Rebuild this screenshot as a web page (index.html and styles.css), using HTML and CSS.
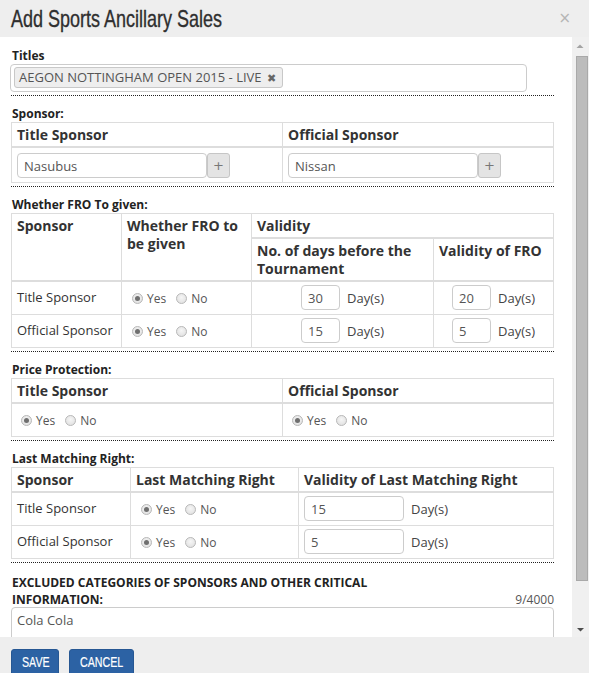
FILE: index.html
```html
<!DOCTYPE html>
<html>
<head>
<meta charset="utf-8">
<link rel="stylesheet" href="styles.css">
</head>
<body>
<div class="modal">
  <div class="modal-header">
    <h1 class="modal-title"><span class="cond">Add Sports Ancillary Sales</span></h1>
    <span class="close">×</span>
  </div>
  <div class="modal-main">
  <div class="modal-body">
    <div class="section">
      <div class="label">Titles</div>
      <div class="tag-input">
        <span class="tag">AEGON NOTTINGHAM OPEN 2015 - LIVE <b class="tag-x">✖</b></span>
      </div>
    </div>

    <div class="section">
      <div class="label">Sponsor:</div>
      <table class="grid sponsor">
        <thead>
          <tr><th class="half">Title Sponsor</th><th>Official Sponsor</th></tr>
        </thead>
        <tbody>
          <tr>
            <td><div class="addon"><input class="field w190" value="Nasubus"><button class="plus">+</button></div></td>
            <td><div class="addon"><input class="field w190" value="Nissan"><button class="plus">+</button></div></td>
          </tr>
        </tbody>
      </table>
    </div>

    <div class="section">
      <div class="label">Whether FRO To given:</div>
      <table class="grid fro">
        <thead>
          <tr>
            <th rowspan="2" class="c-sp">Sponsor</th>
            <th rowspan="2" class="c-given">Whether FRO to be given</th>
            <th colspan="2" class="sub">Validity</th>
          </tr>
          <tr>
            <th class="c-days">No. of days before the Tournament</th>
            <th>Validity of FRO</th>
          </tr>
        </thead>
        <tbody>
          <tr>
            <td>Title Sponsor</td>
            <td><span class="radios"><span class="radio on"></span><span class="rl">Yes</span><span class="radio"></span><span class="rl">No</span></span></td>
            <td class="center"><input class="field num" value="30"><span class="days">Day(s)</span></td>
            <td class="center"><input class="field num" value="20"><span class="days">Day(s)</span></td>
          </tr>
          <tr>
            <td>Official Sponsor</td>
            <td><span class="radios"><span class="radio on"></span><span class="rl">Yes</span><span class="radio"></span><span class="rl">No</span></span></td>
            <td class="center"><input class="field num" value="15"><span class="days">Day(s)</span></td>
            <td class="center"><input class="field num" value="5"><span class="days">Day(s)</span></td>
          </tr>
        </tbody>
      </table>
    </div>

    <div class="section">
      <div class="label">Price Protection:</div>
      <table class="grid price">
        <thead>
          <tr><th class="half">Title Sponsor</th><th>Official Sponsor</th></tr>
        </thead>
        <tbody>
          <tr>
            <td><span class="radios"><span class="radio on"></span><span class="rl">Yes</span><span class="radio"></span><span class="rl">No</span></span></td>
            <td><span class="radios"><span class="radio on"></span><span class="rl">Yes</span><span class="radio"></span><span class="rl">No</span></span></td>
          </tr>
        </tbody>
      </table>
    </div>

    <div class="section">
      <div class="label">Last Matching Right:</div>
      <table class="grid lmr">
        <thead>
          <tr><th class="c-lsp">Sponsor</th><th class="c-lmr">Last Matching Right</th><th>Validity of Last Matching Right</th></tr>
        </thead>
        <tbody>
          <tr>
            <td>Title Sponsor</td>
            <td><span class="radios"><span class="radio on"></span><span class="rl">Yes</span><span class="radio"></span><span class="rl">No</span></span></td>
            <td><input class="field w100" value="15"><span class="days">Day(s)</span></td>
          </tr>
          <tr>
            <td>Official Sponsor</td>
            <td><span class="radios"><span class="radio on"></span><span class="rl">Yes</span><span class="radio"></span><span class="rl">No</span></span></td>
            <td><input class="field w100" value="5"><span class="days">Day(s)</span></td>
          </tr>
        </tbody>
      </table>
    </div>

    <div class="excluded">
      <div class="ex-head">
        <div class="label ex-label">EXCLUDED CATEGORIES OF SPONSORS AND OTHER CRITICAL INFORMATION:</div>
        <div class="count">9/4000</div>
      </div>
      <textarea class="area">Cola Cola</textarea>
    </div>
  </div>
  <div class="scrollbar">
    <svg class="sb-btn" width="17" height="17" viewBox="0 0 17 17"><path d="M4.5 11 L11.5 11 L8 7.5 Z" fill="#a3a3a3"/></svg>
    <div class="sb-track"><div class="sb-thumb"></div></div>
    <svg class="sb-btn" width="17" height="17" viewBox="0 0 17 17"><path d="M5 8 L12 8 L8.5 11.5 Z" fill="#4d4d4d"/></svg>
  </div>
  </div>
  <div class="modal-footer">
    <button class="btn btn-save"><span class="cond">SAVE</span></button>
    <button class="btn btn-cancel"><span class="cond">CANCEL</span></button>
  </div>
</div>
</body>
</html>
```

FILE: styles.css
```css
* { box-sizing: border-box; }
html, body { margin: 0; padding: 0; }
body {
  font-family: "Open Sans", "Liberation Sans", sans-serif;
  font-size: 13px;
  color: #333;
  background: #fff;
}
.modal {
  width: 589px;
  height: 673px;
  display: flex;
  flex-direction: column;
  overflow: hidden;
}
.modal-header {
  height: 37px;
  background: #eeeeee;
  display: flex;
  align-items: center;
  justify-content: space-between;
  padding: 0 18px 0 11px;
  flex: none;
}
.modal-title {
  margin: 0;
  font-family: "Liberation Sans", sans-serif;
  font-weight: normal;
  font-size: 24px;
  line-height: 30px;
  color: #2f2f2f;
  white-space: nowrap;
  width: 215px;
  -webkit-text-stroke: 0.35px #2f2f2f;
}
.cond {
  display: inline-block;
  transform: scaleX(0.75);
  transform-origin: left center;
}
.close {
  font-family: "DejaVu Sans", sans-serif;
  font-size: 15px;
  color: #b5b5b5;
  line-height: 1;
  margin-top: -1px;
}
.modal-main {
  height: 600px;
  flex: none;
  display: flex;
}
.modal-body {
  width: 572px;
  height: 600px;
  overflow: hidden;
  padding: 11px 18px 16px 11px;
}
.scrollbar {
  width: 17px;
  background: #f0f0f0;
  display: flex;
  flex-direction: column;
}
.sb-btn { display: block; flex: none; }
.sb-track { flex: 1; }
.sb-thumb {
  margin: 2px 1px 0 4px;
  height: 525px;
  background: #bcbcbc;
  border: 1px solid #a9a9a9;
}
.section {
  border-bottom: 1px dotted #222;
  padding-bottom: 3px;
  margin-bottom: 10px;
}
.label {
  font-weight: bold;
  font-size: 12px;
  line-height: 16px;
  color: #222;
  margin-left: 1px;
}
.tag-input {
  width: 517px;
  height: 28px;
  margin-left: -1px;
  border: 1px solid #ccc;
  border-radius: 4px;
  padding: 2px 3px;
}
.tag {
  display: inline-block;
  height: 21px;
  line-height: 19px;
  border: 1px solid #c8c8c8;
  border-radius: 3px;
  background: #eeeeee;
  color: #555;
  font-size: 13px;
  padding: 0 6px 0 4px;
}
.tag-x {
  font-family: "DejaVu Sans", sans-serif;
  font-size: 11px;
  color: #666;
  margin-left: 2px;
}
.grid {
  width: 100%;
  border-collapse: collapse;
  border: 1px solid #ddd;
}
.grid th, .grid td {
  border: 1px solid #ddd;
  text-align: left;
  vertical-align: top;
}
.grid th {
  font-size: 14px;
  font-weight: bold;
  line-height: 18px;
  padding: 3px 5px 2px 5px;
  color: #333;
}
.grid thead tr:last-child th, .grid th[rowspan] { border-bottom: 2px solid #ddd; }
.grid .sub { border-bottom: 2px solid #ddd; }
.grid td {
  padding: 5px 5px 4px 5px;
  line-height: 18px;
  font-size: 13px;
}
.fro td, .lmr td { padding-top: 6px; padding-bottom: 6px; }
.fro td.center, .lmr td:last-child { padding-top: 3px; padding-bottom: 3px; }
.half { width: 50%; }
.c-sp { width: 110px; }
.c-given { width: 130px; }
.c-days { width: 182px; }
.c-lsp { width: 119px; }
.c-lmr { width: 168px; }
.addon { display: flex; }
.field {
  height: 25px;
  border: 1px solid #ccc;
  border-radius: 4px;
  font-family: "Open Sans", "Liberation Sans", sans-serif;
  font-size: 13px;
  color: #555;
  padding: 0 6px;
  background: #fff;
  vertical-align: middle;
}
.w190 { width: 190px; }
.w100 { width: 100px; }
.num { width: 39px; }
.plus {
  width: 23px;
  height: 25px;
  border: 1px solid #c6c6c6;
  border-radius: 3px;
  background: #e4e4e4;
  color: #777;
  font-size: 13px;
  padding: 0;
  font-family: "DejaVu Sans", sans-serif;
}
.center { text-align: center !important; }
.days { margin-left: 7px; color: #444; font-size: 13px; vertical-align: middle; }
.radios { display: inline-flex; align-items: center; margin-left: 5px; }
.price .radios { margin-left: 4px; }
.radio {
  width: 11px;
  height: 11px;
  border-radius: 50%;
  border: 1px solid #b9b9b9;
  background: radial-gradient(circle at 50% 40%, #f6f6f6, #dcdcdc);
  display: inline-block;
  position: relative;
}
.radio.on::after {
  content: "";
  position: absolute;
  left: 2px; top: 2px;
  width: 5px; height: 5px;
  border-radius: 50%;
  background: #6f6f6f;
}
.rl { font-size: 12px; color: #555; margin: 2px 10px 0 4px; }
.price td { padding: 6px 5px 6px 5px; }
.ex-head { display: flex; justify-content: space-between; align-items: flex-end; }
.excluded { padding-top: 1px; }
.ex-label { width: 380px; line-height: 17px; }
.count { font-size: 12px; color: #555; line-height: 16px; }
.area {
  display: block;
  width: 100%;
  height: 62px;
  margin-top: -1px;
  border: 1px solid #ccc;
  border-radius: 4px;
  font-family: "Open Sans", "Liberation Sans", sans-serif;
  font-size: 13px;
  color: #555;
  padding: 3px 5px;
  resize: none;
}
.modal-footer {
  flex: 1;
  background: #eeeeee;
  padding: 12px 11px 0 11px;
  display: flex;
  gap: 10px;
  align-items: flex-start;
}
.btn {
  height: 30px;
  background: #2c62a4;
  color: #fff;
  border: 1px solid #265793;
  border-radius: 3px;
  font-family: "Liberation Sans", sans-serif;
  font-size: 15px;
  padding: 0 0 5px 10px;
  text-align: left;
  -webkit-text-stroke: 0.2px #fff;
}
.btn .cond { transform: scaleX(0.71); }
.btn-save { width: 48px; }
.btn-cancel { width: 65px; }
```
